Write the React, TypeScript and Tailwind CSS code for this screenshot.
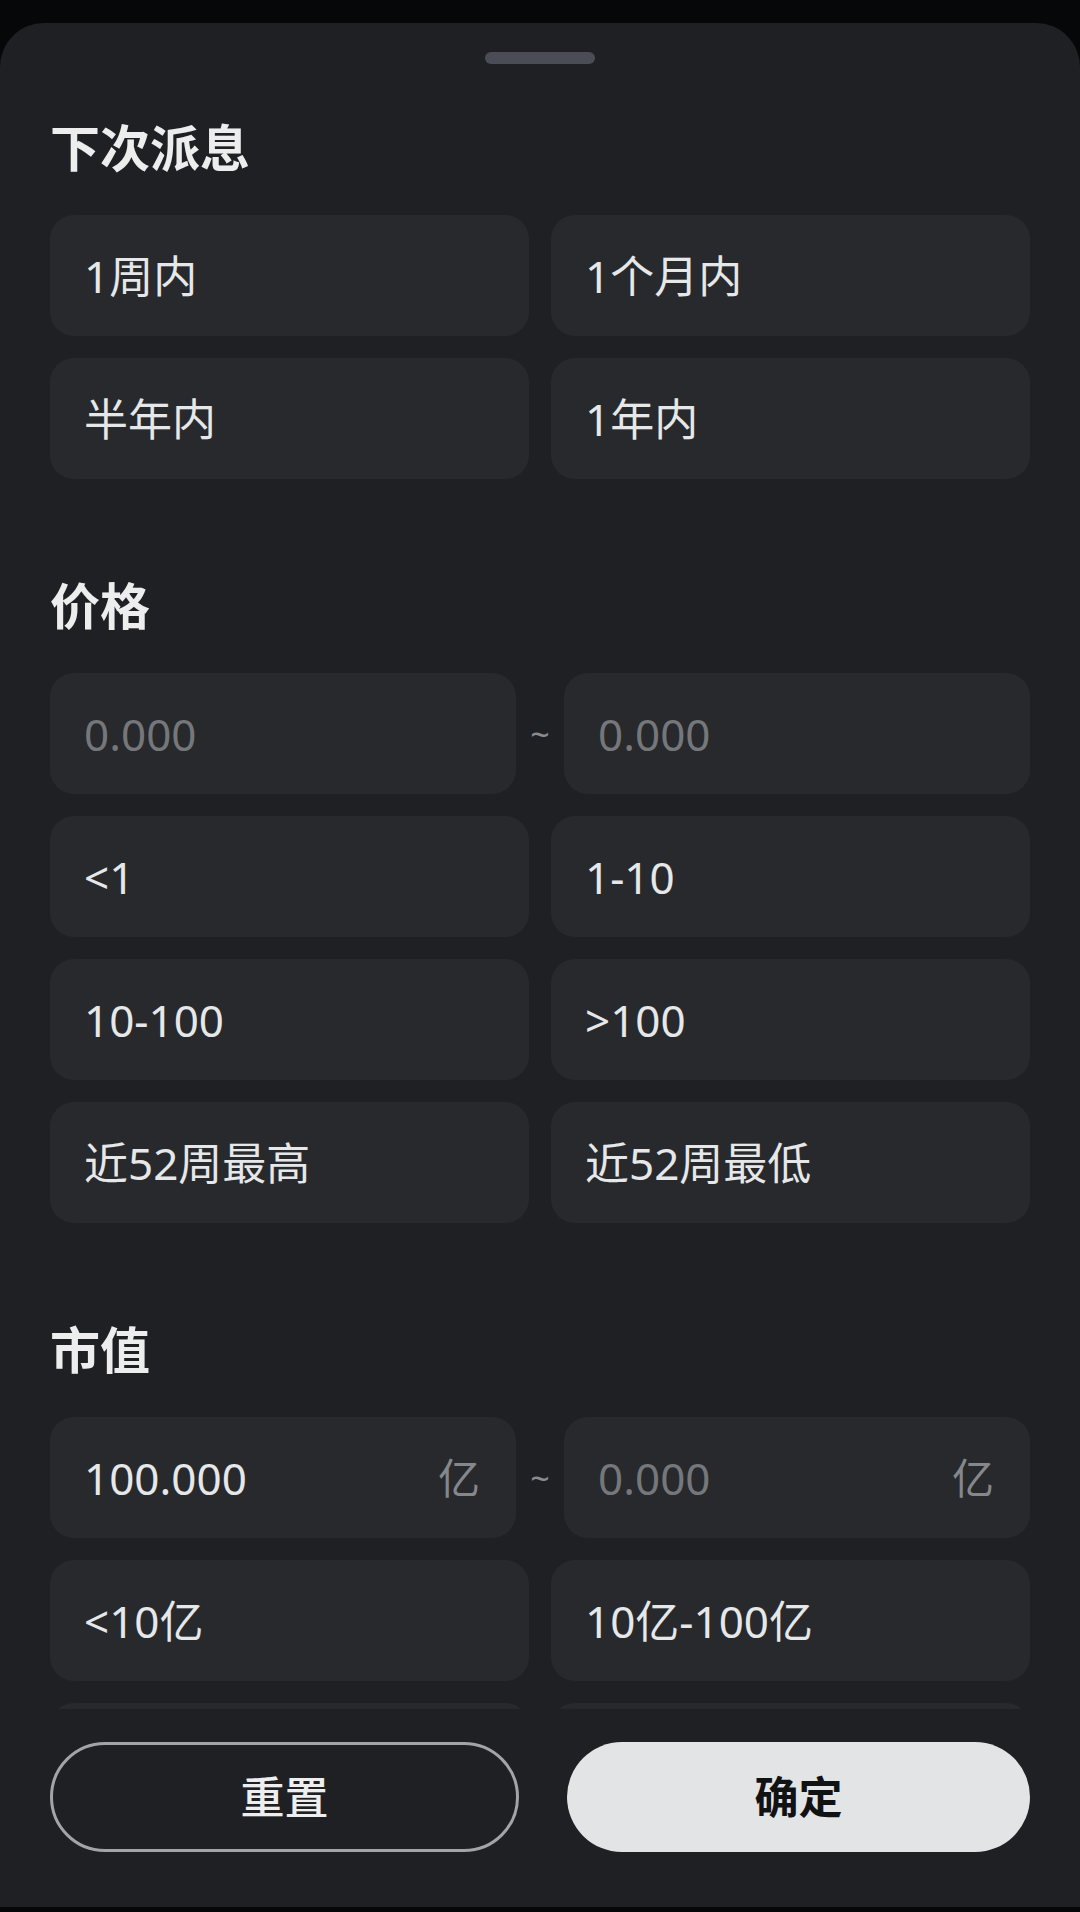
import React from "react";

const font = { fontFamily: '"Noto Sans", "Noto Sans CJK SC", sans-serif' };

type RangeProps = { left: string; leftFilled?: boolean; right: string; unit?: string };

const Option = ({ label }: { label: string }) => (
	<div className="h-[121px] rounded-[24px] bg-[#27292c] flex items-center pl-[34px] text-[44px] text-[#e6e7e9] leading-none">
		{label}
	</div>
);

const Title = ({ text }: { text: string }) => (
	<h2 className="h-[58px] leading-[56px] text-[50px] font-semibold text-[#ededee] mb-[37px]">{text}</h2>
);

const RangeInput = ({ value, filled, unit }: { value: string; filled?: boolean; unit?: string }) => (
	<div className="flex-1 h-[121px] rounded-[24px] bg-[#27292c] flex items-center justify-between pl-[34px] pr-[36px] text-[44px] leading-none">
		<span className={filled ? "text-[#e6e7e9]" : "text-[#75777b]"}>{value}</span>
		{unit && <span className="text-[#85878a] text-[42px]">{unit}</span>}
	</div>
);

const Range = ({ left, leftFilled, right, unit }: RangeProps) => (
	<div className="flex items-center mb-[22px]">
		<RangeInput value={left} filled={leftFilled} unit={unit} />
		<div className="w-[48px] flex items-center justify-center text-[#8a8b8e] text-[34px] leading-none">~</div>
		<RangeInput value={right} unit={unit} />
	</div>
);

const Grid = ({ items }: { items: string[] }) => (
	<div className="grid grid-cols-2 gap-[22px]">
		{items.map((it, i) => (it ? <Option key={it} label={it} /> : <div key={i} className="h-[121px] rounded-[24px] bg-[#27292c]" />))}
	</div>
);

export default function App() {
	return (
		<div className="w-[1080px] h-[1912px] bg-[#060709] pt-[23px] overflow-hidden" style={font}>
			<div className="h-[1884px] bg-[#1f2023] rounded-t-[44px] flex flex-col">
				<div className="flex justify-center pt-[29px]">
					<div className="w-[110px] h-[12px] rounded-full bg-[#4a4d56]" />
				</div>

				<div className="flex-1 overflow-hidden px-[50px] pt-[56px]">
					<section>
						<Title text="下次派息" />
						<Grid items={["1周内", "1个月内", "半年内", "1年内"]} />
					</section>

					<section className="mt-[99px]">
						<Title text="价格" />
						<Range left="0.000" right="0.000" />
						<Grid items={["<1", "1-10", "10-100", ">100", "近52周最高", "近52周最低"]} />
					</section>

					<section className="mt-[99px]">
						<Title text="市值" />
						<Range left="100.000" leftFilled right="0.000" unit="亿" />
						{/* last row is scrolled below the fold, only its top edge shows */}
						<Grid items={["<10亿", "10亿-100亿", "", ""]} />
					</section>
				</div>

				<div className="flex gap-[48px] px-[50px] pt-[33px] pb-[55px]">
					<button className="flex-1 h-[110px] rounded-full border-[3px] border-[#a3a4a6] text-[#eeeeef] text-[44px] font-medium">
						重置
					</button>
					<button className="flex-1 h-[110px] rounded-full bg-[#e3e4e6] text-[#111214] text-[44px] font-semibold">
						确定
					</button>
				</div>
			</div>
		</div>
	);
}
